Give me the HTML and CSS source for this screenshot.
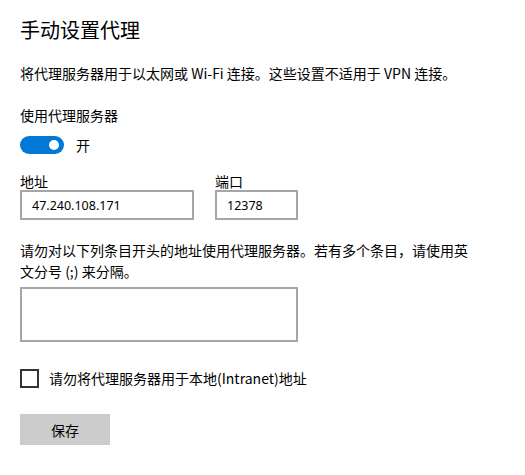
FILE: index.html
```html
<!DOCTYPE html>
<html lang="zh-CN">
<head>
  <meta charset="UTF-8" />
  <meta name="viewport" content="width=device-width, initial-scale=1.0"/>
  <title>手动设置代理</title>
  <link rel="stylesheet" href="styles.css">
</head>
<body>
  <div class="page">
    <h1>手动设置代理</h1>
    <p class="desc">将代理服务器用于以太网或 Wi-Fi 连接。这些设置不适用于 VPN 连接。</p>

    <p class="label">使用代理服务器</p>
    <div class="toggle-row">
      <span class="toggle"><span class="knob"></span></span>
      <span>开</span>
    </div>

    <div class="fields">
      <label class="field">
        <span class="field-label">地址</span>
        <input class="box addr" type="text" value="47.240.108.171" />
      </label>
      <label class="field">
        <span class="field-label">端口</span>
        <input class="box port" type="text" value="12378" />
      </label>
    </div>

    <p class="note">请勿对以下列条目开头的地址使用代理服务器。若有多个条目，请使用英文分号 (;) 来分隔。</p>
    <textarea class="box exceptions"></textarea>

    <label class="check-row">
      <span class="check"></span>
      <span>请勿将代理服务器用于本地(Intranet)地址</span>
    </label>

    <button class="save">保存</button>
  </div>
</body>
</html>
```

FILE: styles.css
```css
body {
  margin: 0;
  background-color: #fff;
  font-family: "Noto Sans CJK SC", "Noto Sans", sans-serif;
  font-size: 14px;
  color: #000;
}
.page {
  padding: 18px 20px;
}
h1 {
  margin: 0;
  font-size: 20px;
  font-weight: normal;
  line-height: 24px;
}
.desc {
  margin: 21px 0 0;
  line-height: 20px;
}
.label {
  margin: 22px 0 0;
  line-height: 20px;
}
.toggle-row {
  margin-top: 11px;
  display: flex;
  align-items: center;
  gap: 12px;
  height: 18px;
}
.toggle {
  width: 44px;
  height: 18px;
  border-radius: 9px;
  background-color: #0078d7;
  display: flex;
  align-items: center;
  justify-content: flex-end;
  padding-right: 5px;
  box-sizing: border-box;
}
.knob {
  width: 10px;
  height: 10px;
  border-radius: 50%;
  background-color: #fff;
}
.fields {
  margin-top: 18px;
  display: flex;
  gap: 21px;
}
.field {
  display: flex;
  flex-direction: column;
}
.field-label {
  line-height: 18px;
}
.box {
  border: 2px solid #a6a6a6;
  box-sizing: border-box;
  font-family: "Noto Sans", sans-serif;
  font-size: 12.5px;
  color: #000;
  background: #fff;
  outline: none;
  margin: 0;
}
input.box {
  height: 30px;
  padding: 0 10px;
}
.addr {
  width: 174px;
}
.port {
  width: 83px;
}
.note {
  margin: 20px 0 0;
  width: 460px;
  line-height: 21px;
}
.exceptions {
  display: block;
  margin-top: 5px;
  width: 278px;
  height: 55px;
  resize: none;
}
.check-row {
  margin-top: 26px;
  display: flex;
  align-items: center;
  gap: 10px;
  height: 20px;
}
.check {
  width: 19px;
  height: 19px;
  border: 2px solid #333;
  box-sizing: border-box;
}
.save {
  margin-top: 26px;
  width: 90px;
  height: 31px;
  border: none;
  background-color: #cccccc;
  font-family: "Noto Sans CJK SC", sans-serif;
  font-size: 14px;
  color: #000;
  padding: 0;
}
```
